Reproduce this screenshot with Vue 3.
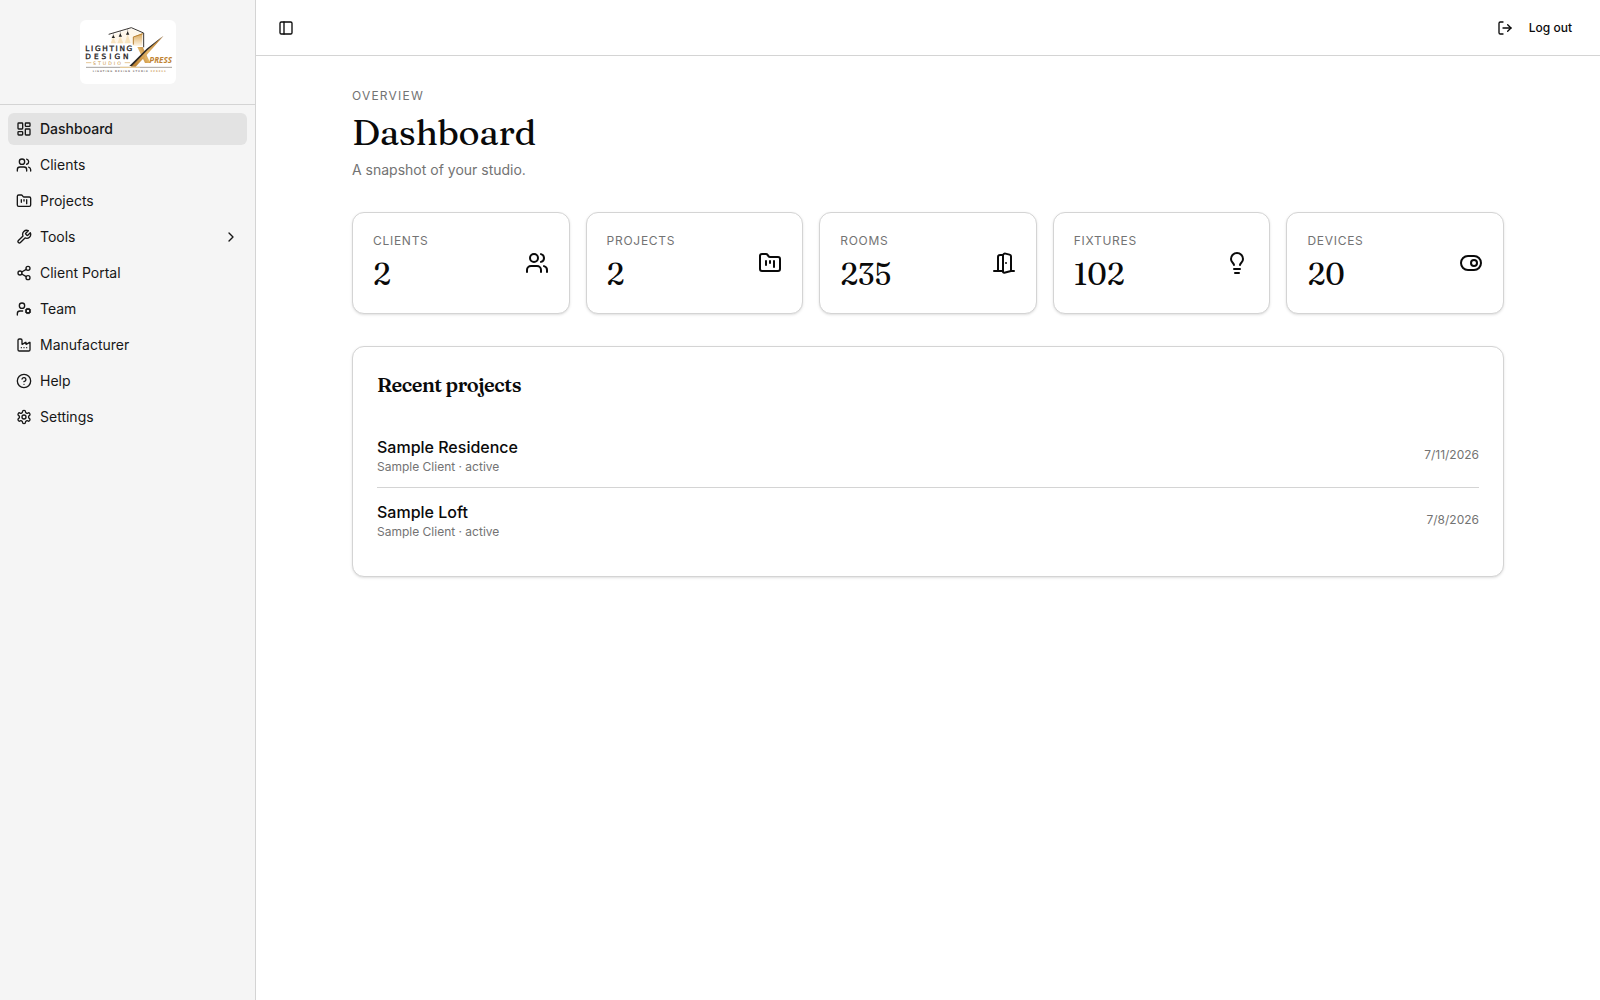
<script setup>
import { ref } from 'vue'

const icons = {
  dashboard:
    '<rect width="7" height="9" x="3" y="3" rx="1"/><rect width="7" height="5" x="14" y="3" rx="1"/><rect width="7" height="9" x="14" y="12" rx="1"/><rect width="7" height="5" x="3" y="16" rx="1"/>',
  users:
    '<path d="M16 21v-2a4 4 0 0 0-4-4H6a4 4 0 0 0-4 4v2"/><circle cx="9" cy="7" r="4"/><path d="M22 21v-2a4 4 0 0 0-3-3.87"/><path d="M16 3.13a4 4 0 0 1 0 7.75"/>',
  folder:
    '<path d="M4 20h16a2 2 0 0 0 2-2V8a2 2 0 0 0-2-2h-7.93a2 2 0 0 1-1.66-.9l-.82-1.2A2 2 0 0 0 7.93 3H4a2 2 0 0 0-2 2v13c0 1.1.9 2 2 2Z"/><path d="M8 10v4"/><path d="M12 10v2"/><path d="M16 10v6"/>',
  wrench:
    '<path d="M14.7 6.3a1 1 0 0 0 0 1.4l1.6 1.6a1 1 0 0 0 1.4 0l3.77-3.77a6 6 0 0 1-7.94 7.94l-6.91 6.91a2.12 2.12 0 0 1-3-3l6.91-6.91a6 6 0 0 1 7.94-7.94l-3.76 3.76z"/>',
  share:
    '<circle cx="18" cy="5" r="3"/><circle cx="6" cy="12" r="3"/><circle cx="18" cy="19" r="3"/><path d="m8.59 13.51 6.83 3.98"/><path d="m15.41 6.51-6.82 3.98"/>',
  team:
    '<path d="M10 15H6a4 4 0 0 0-4 4v2"/><circle cx="9" cy="7" r="4"/><circle cx="18" cy="15" r="3"/><path d="m14.305 16.53.923-.382"/><path d="m15.228 13.852-.923-.383"/><path d="m16.852 12.228-.383-.923"/><path d="m16.852 17.772-.383.924"/><path d="m19.148 12.228.383-.923"/><path d="m19.53 18.696-.382-.924"/><path d="m20.772 13.852.924-.383"/><path d="m20.772 16.148.924.383"/>',
  factory:
    '<path d="M12 16h.01"/><path d="M16 16h.01"/><path d="M8 16h.01"/><path d="M3 19a2 2 0 0 0 2 2h14a2 2 0 0 0 2-2V8.5a.5.5 0 0 0-.769-.422l-4.462 2.844A.5.5 0 0 1 15 10.5v-2a.5.5 0 0 0-.769-.422L9.77 10.922A.5.5 0 0 1 9 10.5V5a2 2 0 0 0-2-2H5a2 2 0 0 0-2 2z"/>',
  help:
    '<circle cx="12" cy="12" r="10"/><path d="M9.09 9a3 3 0 0 1 5.83 1c0 2-3 3-3 3"/><path d="M12 17h.01"/>',
  settings:
    '<path d="M12.22 2h-.44a2 2 0 0 0-2 2v.18a2 2 0 0 1-1 1.73l-.43.25a2 2 0 0 1-2 0l-.15-.08a2 2 0 0 0-2.73.73l-.22.38a2 2 0 0 0 .73 2.73l.15.1a2 2 0 0 1 1 1.72v.51a2 2 0 0 1-1 1.74l-.15.09a2 2 0 0 0-.73 2.73l.22.38a2 2 0 0 0 2.73.73l.15-.08a2 2 0 0 1 2 0l.43.25a2 2 0 0 1 1 1.73V20a2 2 0 0 0 2 2h.44a2 2 0 0 0 2-2v-.18a2 2 0 0 1 1-1.73l.43-.25a2 2 0 0 1 2 0l.15.08a2 2 0 0 0 2.73-.73l.22-.39a2 2 0 0 0-.73-2.73l-.15-.08a2 2 0 0 1-1-1.74v-.5a2 2 0 0 1 1-1.74l.15-.09a2 2 0 0 0 .73-2.73l-.22-.38a2 2 0 0 0-2.73-.73l-.15.08a2 2 0 0 1-2 0l-.43-.25a2 2 0 0 1-1-1.73V4a2 2 0 0 0-2-2z"/><circle cx="12" cy="12" r="3"/>',
  chevron: '<path d="m9 18 6-6-6-6"/>',
  panel: '<rect width="18" height="18" x="3" y="3" rx="2"/><path d="M9 3v18"/>',
  logout:
    '<path d="m16 17 5-5-5-5"/><path d="M21 12H9"/><path d="M9 21H5a2 2 0 0 1-2-2V5a2 2 0 0 1 2-2h4"/>',
  door:
    '<path d="M11 20H2"/><path d="M11 4.562v16.157a1 1 0 0 0 1.242.97L19 20V5.562a2 2 0 0 0-1.515-1.94l-4-1A2 2 0 0 0 11 4.561z"/><path d="M11 4H8a2 2 0 0 0-2 2v14"/><path d="M14 12h.01"/><path d="M22 20h-3"/>',
  bulb:
    '<path d="M15 14c.2-1 .7-1.7 1.5-2.5 1-.9 1.5-2.2 1.5-3.5A6 6 0 0 0 6 8c0 1 .2 2.2 1.5 3.5.7.7 1.3 1.5 1.5 2.5"/><path d="M9 18h6"/><path d="M10 22h4"/>',
  toggle: '<rect width="20" height="14" x="2" y="5" rx="7"/><circle cx="15" cy="12" r="3"/>',
}

const nav = [
  { label: 'Dashboard', icon: 'dashboard', active: true },
  { label: 'Clients', icon: 'users' },
  { label: 'Projects', icon: 'folder' },
  { label: 'Tools', icon: 'wrench', group: true },
  { label: 'Client Portal', icon: 'share' },
  { label: 'Team', icon: 'team' },
  { label: 'Manufacturer', icon: 'factory' },
  { label: 'Help', icon: 'help' },
  { label: 'Settings', icon: 'settings' },
]

const stats = [
  { label: 'Clients', value: 2, icon: 'users' },
  { label: 'Projects', value: 2, icon: 'folder' },
  { label: 'Rooms', value: 235, icon: 'door' },
  { label: 'Fixtures', value: 102, icon: 'bulb' },
  { label: 'Devices', value: 20, icon: 'toggle' },
]

const projects = [
  { name: 'Sample Residence', meta: 'Sample Client · active', date: '7/11/2026' },
  { name: 'Sample Loft', meta: 'Sample Client · active', date: '7/8/2026' },
]

const sidebarOpen = ref(true)
</script>

<template>
  <div class="shell">
    <aside v-if="sidebarOpen" class="sidebar">
      <div class="brand">
        <svg class="logo" viewBox="30 30 288 192" role="img" aria-label="Lighting Design Xpress Studio">
          <defs>
            <linearGradient id="gold" x1="0" y1="1" x2="1" y2="0">
              <stop offset="0" stop-color="#b87a28" />
              <stop offset="0.5" stop-color="#e2b467" />
              <stop offset="1" stop-color="#a9691c" />
            </linearGradient>
            <linearGradient id="glow" x1="0" y1="0" x2="0" y2="1">
              <stop offset="0" stop-color="#d9a657" />
              <stop offset="1" stop-color="#fff6e6" />
            </linearGradient>
          </defs>
          <path d="M124 76 184 56 216 70 192 78V100H124Z" fill="#fdf6ea" />
          <path d="M130 82l-8 18h16zM151 78l-9 22h18zM173 72l-9 28h18z" fill="#f7e3be" />
          <path d="M190 80 217 70V108H190Z" fill="url(#glow)" />
          <path d="M116 73 184 53 221 69V112" fill="none" stroke="#3b3733" stroke-width="3" />
          <path d="M190 104V81L219 71" fill="none" stroke="#b98335" stroke-width="3" />
          <path d="M130 69V80M151 63V75M173 57V69" stroke="#333" stroke-width="1" />
          <path d="M130 75l5 9h-10zM151 70l5 10h-10zM173 64l5 10h-10z" fill="#222" />
          <text class="logo-word" x="46" y="124" letter-spacing="5">LIGHTING</text>
          <text class="logo-word" x="46" y="146" letter-spacing="9">DESIGN</text>
          <path d="M48 158H64M164 158H180" stroke="#d9ab63" stroke-width="2" />
          <text class="logo-studio" x="69" y="164" letter-spacing="6">STUDIO</text>
          <path d="M202 111H218L241 159H225Z" fill="url(#gold)" />
          <path d="M281 77 230 119 182 170H197L238 126Z" fill="url(#gold)" />
          <path d="M279 78 230 116 178 168H186L232 121Z" fill="#2d2925" />
          <text class="logo-press" x="238" y="159">PRESS</text>
          <path d="M48 172H306" stroke="#77716a" stroke-width="2" />
          <path d="M150 172H210" stroke="#f0cf94" stroke-width="3" />
          <text class="logo-tag" x="68" y="186" letter-spacing="3">
            LIGHTING DESIGN STUDIO <tspan fill="#d0a568">XPRESS</tspan>
          </text>
        </svg>
      </div>
      <nav class="nav" aria-label="Main">
        <component
          :is="item.group ? 'button' : 'a'"
          v-for="item in nav"
          :key="item.label"
          class="nav-item"
          :class="{ active: item.active }"
          :href="item.group ? undefined : '#'"
          :type="item.group ? 'button' : undefined"
          :aria-current="item.active ? 'page' : undefined"
        >
          <svg class="icon" viewBox="0 0 24 24" aria-hidden="true" v-html="icons[item.icon]" />
          <span class="nav-label">{{ item.label }}</span>
          <svg v-if="item.group" class="icon" viewBox="0 0 24 24" aria-hidden="true" v-html="icons.chevron" />
        </component>
      </nav>
    </aside>

    <div class="page">
      <header class="topbar">
        <button class="icon-button" type="button" aria-label="Toggle sidebar" @click="sidebarOpen = !sidebarOpen">
          <svg class="icon" viewBox="0 0 24 24" aria-hidden="true" v-html="icons.panel" />
        </button>
        <button class="logout" type="button">
          <svg class="icon" viewBox="0 0 24 24" aria-hidden="true" v-html="icons.logout" />
          Log out
        </button>
      </header>

      <main class="main">
        <div class="content">
          <div class="heading">
            <p class="eyebrow">Overview</p>
            <h1>Dashboard</h1>
            <p class="subtitle">A snapshot of your studio.</p>
          </div>

          <section class="stats" aria-label="Totals">
            <a v-for="stat in stats" :key="stat.label" class="card stat" href="#">
              <div class="stat-text">
                <span class="stat-label">{{ stat.label }}</span>
                <span class="stat-value">{{ stat.value }}</span>
              </div>
              <svg class="icon large" viewBox="0 0 24 24" aria-hidden="true" v-html="icons[stat.icon]" />
            </a>
          </section>

          <section class="card recent">
            <h2>Recent projects</h2>
            <ul class="projects">
              <li v-for="project in projects" :key="project.name">
                <a class="project" href="#">
                  <div>
                    <div class="project-name">{{ project.name }}</div>
                    <div class="small">{{ project.meta }}</div>
                  </div>
                  <span class="small">{{ project.date }}</span>
                </a>
              </li>
            </ul>
          </section>
        </div>
      </main>
    </div>
  </div>
</template>

<style>
body {
  margin: 0;
  background: #fff;
}
</style>

<style scoped>
.shell {
  display: flex;
  min-height: 100vh;
  font-family: Inter, "Liberation Sans", sans-serif;
  font-size: 14px;
  line-height: 20px;
  color: #0a0a0a;
}
.shell * {
  box-sizing: border-box;
}
a {
  color: inherit;
  text-decoration: none;
}
button {
  border: 0;
  background: none;
  font: inherit;
  color: inherit;
  cursor: pointer;
}
h1,
h2,
p,
ul {
  margin: 0;
  padding: 0;
}
.icon {
  width: 16px;
  height: 16px;
  flex-shrink: 0;
  fill: none;
  stroke: currentColor;
  stroke-width: 2;
  stroke-linecap: round;
  stroke-linejoin: round;
}
.icon.large {
  width: 24px;
  height: 24px;
}

.sidebar {
  width: 256px;
  flex-shrink: 0;
  background: #f5f5f5;
  border-right: 1px solid #d4d4d4;
  color: #171717;
}
.brand {
  display: flex;
  justify-content: center;
  padding: 20px;
  border-bottom: 1px solid #d4d4d4;
}
.logo {
  display: block;
  width: 96px;
  height: 64px;
  border-radius: 6px;
  background: #fff;
}
.logo-word {
  font: 22px "DejaVu Sans", sans-serif;
  fill: #26231f;
  stroke: #26231f;
  stroke-width: 1;
}
.logo-studio {
  font: 14px "DejaVu Sans", sans-serif;
  fill: #c99343;
}
.logo-press {
  font: italic bold 24px "Open Sans", sans-serif;
  fill: #bf8434;
}
.logo-tag {
  font: bold 7px "DejaVu Sans", sans-serif;
  fill: #77736e;
}
.nav {
  display: flex;
  flex-direction: column;
  gap: 4px;
  padding: 8px;
}
.nav-item {
  display: flex;
  align-items: center;
  gap: 8px;
  height: 32px;
  padding: 0 8px;
  border-radius: 6px;
  text-align: left;
}
.nav-item.active {
  background: #e3e3e3;
  font-weight: 500;
}
.nav-label {
  flex: 1;
}

.page {
  flex: 1;
  min-width: 0;
}
.topbar {
  display: flex;
  align-items: center;
  justify-content: space-between;
  height: 56px;
  padding: 0 16px;
  border-bottom: 1px solid #d4d4d4;
}
.icon-button {
  display: grid;
  place-items: center;
  width: 28px;
  height: 28px;
  padding: 0;
}
.logout {
  display: flex;
  align-items: center;
  gap: 16px;
  height: 32px;
  padding: 0 12px;
  font-size: 12px;
  font-weight: 500;
}
.main {
  padding: 32px;
}
.content {
  display: flex;
  flex-direction: column;
  gap: 32px;
  max-width: 1152px;
  margin: 0 auto;
}
.heading {
  display: flex;
  flex-direction: column;
  gap: 8px;
}
.eyebrow,
.stat-label {
  font-size: 12px;
  line-height: 16px;
  text-transform: uppercase;
  color: #737373;
}
.eyebrow {
  letter-spacing: 0.1em;
}
.stat-label {
  letter-spacing: 0.06em;
}
h1 {
  font: 400 36px/40px Fraunces, "Liberation Serif", serif;
  letter-spacing: -0.01em;
}
.subtitle {
  color: #737373;
}
.card {
  border: 1px solid #d4d4d4;
  border-radius: 12px;
  background: #fff;
  box-shadow: 0 1px 3px rgba(0, 0, 0, 0.1), 0 1px 2px -1px rgba(0, 0, 0, 0.1);
}
.stats {
  display: grid;
  grid-template-columns: repeat(5, 1fr);
  gap: 16px;
}
.stat {
  display: flex;
  align-items: center;
  justify-content: space-between;
  padding: 20px;
}
.stat-text {
  display: flex;
  flex-direction: column;
  gap: 8px;
}
.stat-value {
  font: 400 30px/36px Fraunces, "Liberation Serif", serif;
}
.recent {
  padding: 24px;
}
h2 {
  margin-bottom: 24px;
  font: 600 20px/28px Fraunces, "Liberation Serif", serif;
  letter-spacing: -0.025em;
}
.projects {
  list-style: none;
}
.projects li + li {
  border-top: 1px solid #d4d4d4;
}
.project {
  display: flex;
  align-items: center;
  justify-content: space-between;
  padding: 12px 0;
}
.project-name {
  font-size: 16px;
  line-height: 24px;
  font-weight: 500;
}
.small {
  font-size: 12px;
  line-height: 16px;
  color: #737373;
}
</style>
